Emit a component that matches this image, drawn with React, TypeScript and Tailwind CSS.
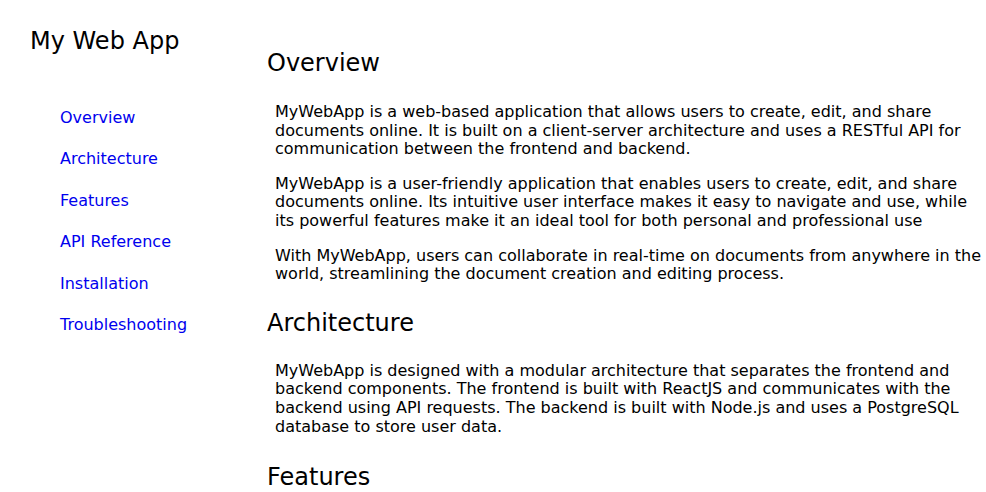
export default function App() {
  const nav = ["Overview", "Architecture", "Features", "API Reference", "Installation", "Troubleshooting"];
  return (
    <div className="flex min-h-[492px] bg-white font-['DejaVu_Sans',sans-serif] text-black">
      <aside className="w-[267px] shrink-0 pl-[30px] pt-[27px]">
        <h1 className="text-[24px] leading-[28px] font-normal">My Web App</h1>
        <nav className="mt-[54px] pl-[30px] flex flex-col gap-[22.8px]">
          {nav.map((n) => (
            <a key={n} href="#" className="text-[16px] leading-[18.6px] text-[#0000ee]">
              {n}
            </a>
          ))}
        </nav>
      </aside>
      <main className="flex-1 pt-[49px]">
        <h2 className="text-[24px] leading-[28px] font-normal">Overview</h2>
        <div className="mt-[26px] pl-[8px] flex flex-col gap-[16px] text-[16px] leading-[18.6px] text-black">
          <p>MyWebApp is a web-based application that allows users to create, edit, and share documents online. It is built on a client-server architecture and uses a RESTful API for communication between the frontend and backend.</p>
          <p>MyWebApp is a user-friendly application that enables users to create, edit, and share documents online. Its intuitive user interface makes it easy to navigate and use, while its powerful features make it an ideal tool for both personal and professional use</p>
          <p>With MyWebApp, users can collaborate in real-time on documents from anywhere in the world, streamlining the document creation and editing process.</p>
        </div>
        <h2 className="mt-[25px] text-[24px] leading-[28px] font-normal">Architecture</h2>
        <div className="mt-[25px] pl-[8px] text-[16px] leading-[18.6px] text-black">
          <p>MyWebApp is designed with a modular architecture that separates the frontend and backend components. The frontend is built with ReactJS and communicates with the backend using API requests. The backend is built with Node.js and uses a PostgreSQL database to store user data.</p>
        </div>
        <h2 className="mt-[27px] text-[24px] leading-[28px] font-normal">Features</h2>
      </main>
    </div>
  );
}
